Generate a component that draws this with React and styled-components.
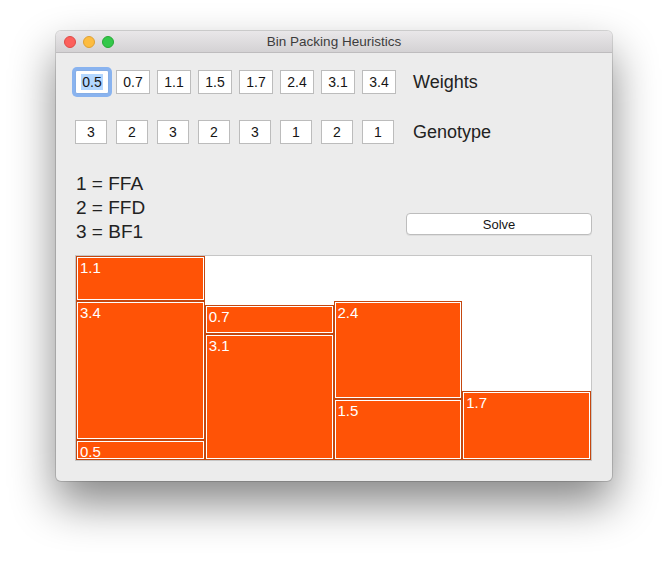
import React from 'react'
import styled, { createGlobalStyle } from 'styled-components'

const GlobalStyle = createGlobalStyle`
  body {
    margin:0;
    background:#fff;
    font-family:"Liberation Sans", Arial, sans-serif;
  }
`
const Page = styled.div`
  padding:31px 56px 80px;
`
const Window = styled.div`
  width:556px;
  border-radius:5px;
  background:#ececec;
  box-shadow:0 0 0 1px rgba(0,0,0,0.14), 0 22px 45px rgba(0,0,0,0.48);
  overflow:hidden;
`
const TitleBar = styled.div`
  height:21px;
  display:grid;
  grid-template-columns:1fr auto 1fr;
  align-items:center;
  padding:0 8px;
  background:linear-gradient(#e9e7e9,#d4d2d4);
  border-bottom:1px solid #bebcbe;
`
const Lights = styled.div`
  display:flex;
  gap:7px;
`
const Light = styled.span`
  width:12px;
  height:12px;
  border-radius:50%;
  box-sizing:border-box;
  background:${p => p.$fill};
  border:1px solid ${p => p.$edge};
`
const Title = styled.div`
  font-size:13.5px;
  color:#3c3c3c;
`
const Body = styled.div`
  padding:17px 20px 20px 19px;
`
const InputRow = styled.div`
  display:grid;
  grid-template-columns:repeat(8, 34px) auto;
  column-gap:7px;
  align-items:center;
  margin-top:${p => p.$top || 0}px;
`
const Field = styled.div`
  width:${p => p.$w}px;
  height:24px;
  box-sizing:border-box;
  display:flex;
  align-items:center;
  justify-content:center;
  background:#fff;
  border:1px solid ${p => (p.$focus ? '#86aee6' : '#bcbcbc')};
  border-radius:${p => (p.$focus ? '2px' : '0')};
  box-shadow:${p => (p.$focus ? '0 0 0 3px rgba(104,160,240,0.75)' : 'none')};
  font-size:14px;
  color:#151515;
`
const Selected = styled.span`
  background:#b3d7ff;
  padding:0 1px;
`
const RowLabel = styled.div`
  margin-left:10px;
  font-size:18px;
  color:#222;
`
const Middle = styled.div`
  display:flex;
  justify-content:space-between;
  align-items:flex-end;
  margin-top:28px;
`
const Legend = styled.div`
  font-size:19px;
  line-height:24px;
  color:#222;
  padding-left:1px;
`
const SolveButton = styled.button`
  width:186px;
  height:22px;
  margin-bottom:9px;
  background:#fff;
  border:1px solid #bdbdbd;
  border-radius:4px;
  font-family:"Liberation Sans", Arial, sans-serif;
  font-size:13px;
  color:#151515;
  box-shadow:0 1px 0 rgba(0,0,0,0.06);
`
const Canvas = styled.div`
  margin-top:11px;
  height:206px;
  box-sizing:border-box;
  border:1px solid #c6c6c6;
  background:#fff;
  display:grid;
  grid-template-columns:repeat(4, 1fr);
`
const Bin = styled.div`
  display:flex;
  flex-direction:column;
  justify-content:flex-end;
  min-width:0;
`
const Item = styled.div`
  box-sizing:border-box;
  background:#ff5306;
  border:1px solid #c4470f;
  box-shadow:inset 0 0 0 1px #fff;
  overflow:hidden;
  color:#fff;
  font-size:15px;
  line-height:17px;
  padding:2px 3px;
`

const weights = ['0.5', '0.7', '1.1', '1.5', '1.7', '2.4', '3.1', '3.4']
const genotype = ['3', '2', '3', '2', '3', '1', '2', '1']
const bins = [[1.1, 3.4, 0.5], [0.7, 3.1], [2.4, 1.5], [1.7]]
const scale = 204 / 5

export default function App() {
  return (
    <Page>
      <GlobalStyle />
      <Window>
        <TitleBar>
          <Lights>
            <Light $fill="#fc605c" $edge="#de4a46" />
            <Light $fill="#fdbc40" $edge="#dea033" />
            <Light $fill="#34c84a" $edge="#27a937" />
          </Lights>
          <Title>Bin Packing Heuristics</Title>
          <span />
        </TitleBar>
        <Body>
          <InputRow>
            {weights.map((w, i) => (
              <Field key={i} $w={34} $focus={i === 0}>
                {i === 0 ? <Selected>{w}</Selected> : w}
              </Field>
            ))}
            <RowLabel>Weights</RowLabel>
          </InputRow>
          <InputRow $top={26}>
            {genotype.map((g, i) => (
              <Field key={i} $w={32}>{g}</Field>
            ))}
            <RowLabel>Genotype</RowLabel>
          </InputRow>
          <Middle>
            <Legend>
              <div>1 = FFA</div>
              <div>2 = FFD</div>
              <div>3 = BF1</div>
            </Legend>
            <SolveButton>Solve</SolveButton>
          </Middle>
          <Canvas>
            {bins.map((bin, i) => (
              <Bin key={i}>
                {bin.map((w, j) => (
                  <Item key={j} style={{ height: w * scale }}>{w.toFixed(1)}</Item>
                ))}
              </Bin>
            ))}
          </Canvas>
        </Body>
      </Window>
    </Page>
  )
}
